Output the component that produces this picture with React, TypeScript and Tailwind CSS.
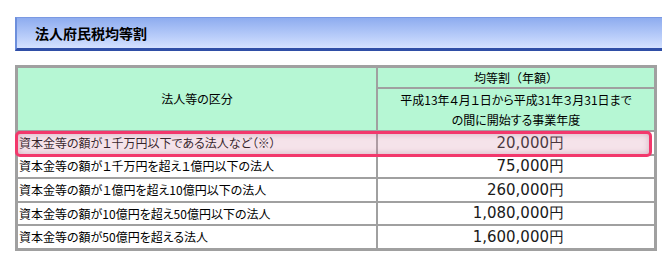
import React from "react"

const rows = [
  { label: "資本金等の額が１千万円以下である法人など（※）", amount: "20,000円" },
  { label: "資本金等の額が１千万円を超え１億円以下の法人", amount: "75,000円" },
  { label: "資本金等の額が１億円を超え10億円以下の法人", amount: "260,000円" },
  { label: "資本金等の額が10億円を超え50億円以下の法人", amount: "1,080,000円" },
  { label: "資本金等の額が50億円を超える法人", amount: "1,600,000円" },
]

const jp = "font-['Noto_Sans_CJK_JP',sans-serif] [font-feature-settings:'palt']"

export default function App() {
  return (
    <div className="relative w-[662px] h-[259px] overflow-hidden bg-white pt-[17px] text-black">
      <div className="ml-[15px] flex h-[34px] items-center border-l-2 border-t border-b-[3px] border-l-[#6d8fdc] border-t-[#7b99e2] border-b-[#2f4ea6] bg-gradient-to-b from-[#8eacef] to-[#d4e1ff] pl-[18px]">
        <h1 className={`${jp} text-[14px] font-bold leading-none`}>法人府民税均等割</h1>
      </div>

      <div
        className={`${jp} mt-[14px] ml-[15px] grid w-[642px] grid-cols-[358px_276px] grid-rows-[19px_41px_repeat(5,21.6px)] gap-[2px] bg-[#a0a0a0] p-[3px] text-[12px]`}
      >
        <div className="row-span-2 flex items-center justify-center bg-[#b6f7d4]">法人等の区分</div>
        <div className="flex items-center justify-center bg-[#b6f7d4] [font-feature-settings:normal]">均等割（年額）</div>
        <div className="flex flex-col items-center justify-center bg-[#b6f7d4] leading-[20px]">
          <span>平成13年４月１日から平成31年３月31日まで</span>
          <span>の間に開始する事業年度</span>
        </div>

        {rows.map((row) => (
          <React.Fragment key={row.amount}>
            <div className="flex items-center bg-white pl-[1px]">{row.label}</div>
            <div className="flex items-center justify-end bg-white pr-[90px] font-['DejaVu_Sans',sans-serif] text-[15px] text-[#1a1a1a]">
              {row.amount}
            </div>
          </React.Fragment>
        ))}
      </div>

      {/* highlight annotation */}
      <div className="pointer-events-none absolute left-[15px] top-[131px] h-[26px] w-[637px] rounded-[5px] border-[3px] border-[#f2386c] bg-[#d890aa]/25 shadow-[inset_0_0_6px_rgba(150,80,110,0.35)]" />
    </div>
  )
}
